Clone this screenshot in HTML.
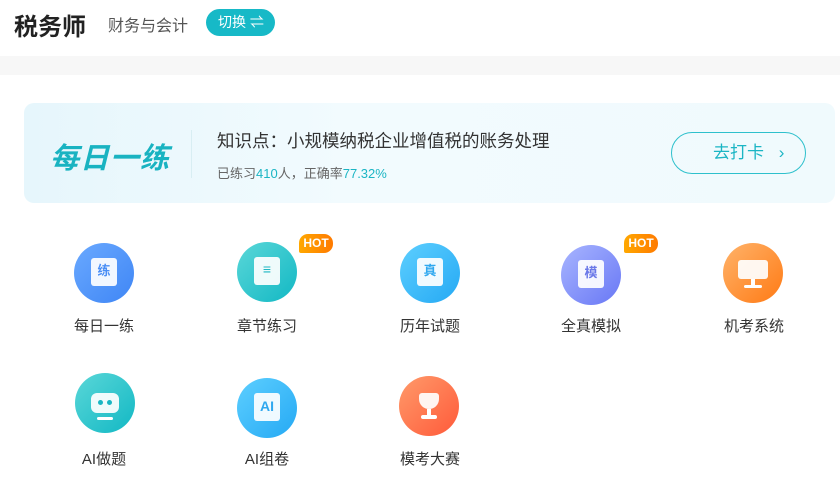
<!DOCTYPE html>
<html><head><meta charset="utf-8"><style>
*{margin:0;padding:0;box-sizing:border-box}
body{width:840px;height:495px;background:#fff;font-family:"Liberation Sans","Noto Sans CJK SC",sans-serif;position:relative;overflow:hidden;color:#333}
.a{position:absolute;white-space:nowrap}
.ic{position:absolute;width:60px;height:60px;border-radius:50%}
.lb{position:absolute;width:120px;text-align:center;font-size:15px;color:#333}
.hot{position:absolute;width:34px;height:19px;border-radius:9px 9px 9px 2px;background:linear-gradient(90deg,#ffa800,#ff7a00);color:#fff;font-size:12px;font-weight:bold;text-align:center;line-height:19px}
.doc{position:absolute;left:17px;top:15px;width:26px;height:28px;background:rgba(255,255,255,.92);border-radius:3px;font-size:13px;font-weight:bold;text-align:center;line-height:26px}
</style></head><body>
<div class="a" style="left:14px;top:7px;font-size:24px;font-weight:bold;color:#222">税务师</div>
<div class="a" style="left:108px;top:12px;font-size:16px;color:#555">财务与会计</div>
<div class="a" style="left:206px;top:9px;width:69px;height:27px;border-radius:14px;background:#17b9c7;color:#fff;font-size:14px;line-height:27px;padding-left:12px">切换 ⇌</div>
<div class="a" style="left:0;top:56px;width:840px;height:19px;background:#f7f7f7"></div>
<div class="a" style="left:24px;top:103px;width:811px;height:100px;border-radius:10px;background:linear-gradient(90deg,#e6f6fc,#f2fbfe 40%,#f0fafd)"></div>
<div class="a" style="left:50px;top:135px;font-size:29px;font-weight:bold;font-style:italic;color:#19b3c1;letter-spacing:1px">每日一练</div>
<div class="a" style="left:191px;top:130px;width:1px;height:48px;background:#d8eef3"></div>
<div class="a" style="left:217px;top:128px;font-size:17.5px;color:#333">知识点：小规模纳税企业增值税的账务处理</div>
<div class="a" style="left:217px;top:163px;font-size:13px;color:#666">已练习<span style="color:#1bb5c4">410</span>人，正确率<span style="color:#1bb5c4">77.32%</span></div>
<div class="a" style="left:671px;top:132px;width:135px;height:42px;border:1.5px solid #2ec0cc;border-radius:21px;color:#1bb5c4;font-size:17px;line-height:39px;padding-left:41px">去打卡 <span style="font-size:17px;margin-left:10px">›</span></div>

<div class="ic" style="left:74px;top:243px;background:linear-gradient(135deg,#6aa9ff,#3f86f5)"><div class="doc" style="color:#4a8ef5">练</div></div>
<div class="ic" style="left:237px;top:242px;background:linear-gradient(135deg,#5ad7d8,#12b8c4)"><div class="doc" style="color:#1fb7c3;font-size:14px;line-height:24px">≡</div></div>
<div class="ic" style="left:400px;top:243px;background:linear-gradient(135deg,#5dcfff,#25a9f4)"><div class="doc" style="color:#2fa8ef">真</div></div>
<div class="ic" style="left:561px;top:245px;background:linear-gradient(135deg,#a8b5ff,#6877f5)"><div class="doc" style="color:#6a78e8">模</div></div>
<div class="ic" style="left:723px;top:243px;background:linear-gradient(135deg,#ffb36a,#ff7a14)"><div style="position:absolute;left:15px;top:17px;width:30px;height:19px;background:#fff;border-radius:3px;opacity:.92"></div><div style="position:absolute;left:28px;top:36px;width:4px;height:6px;background:#fff"></div><div style="position:absolute;left:21px;top:42px;width:18px;height:3px;background:#fff;border-radius:2px"></div></div>
<div class="hot" style="left:299px;top:234px">HOT</div>
<div class="hot" style="left:624px;top:234px">HOT</div>
<div class="lb" style="left:44px;top:315px">每日一练</div>
<div class="lb" style="left:207px;top:315px">章节练习</div>
<div class="lb" style="left:370px;top:315px">历年试题</div>
<div class="lb" style="left:531px;top:315px">全真模拟</div>
<div class="lb" style="left:694px;top:315px">机考系统</div>

<div class="ic" style="left:75px;top:373px;background:linear-gradient(135deg,#5ad7d8,#12b8c4)"><div style="position:absolute;left:16px;top:20px;width:28px;height:20px;background:#fff;border-radius:6px;opacity:.92"></div><div style="position:absolute;left:23px;top:27px;width:5px;height:5px;background:#19b6c3;border-radius:50%"></div><div style="position:absolute;left:32px;top:27px;width:5px;height:5px;background:#19b6c3;border-radius:50%"></div><div style="position:absolute;left:22px;top:44px;width:16px;height:3px;background:#fff;border-radius:2px"></div></div>
<div class="ic" style="left:237px;top:378px;background:linear-gradient(135deg,#5dcfff,#25a9f4)"><div class="doc" style="color:#2fa8ef;font-size:14px">AI</div></div>
<div class="ic" style="left:399px;top:376px;background:linear-gradient(135deg,#ff9a6a,#ff5a3a)"><div style="position:absolute;left:20px;top:17px;width:20px;height:16px;background:#fff;border-radius:3px 3px 10px 10px;opacity:.92"></div><div style="position:absolute;left:28px;top:33px;width:4px;height:6px;background:#fff"></div><div style="position:absolute;left:22px;top:39px;width:16px;height:4px;background:#fff;border-radius:2px"></div></div>
<div class="lb" style="left:44px;top:448px">AI做题</div>
<div class="lb" style="left:207px;top:448px">AI组卷</div>
<div class="lb" style="left:370px;top:448px">模考大赛</div>
</body></html>
